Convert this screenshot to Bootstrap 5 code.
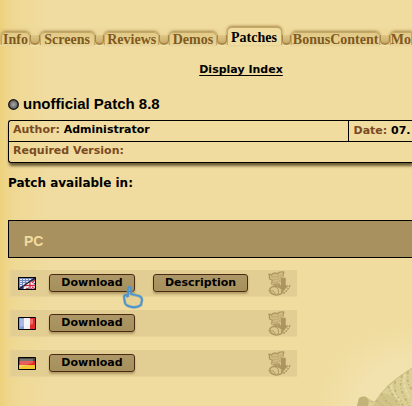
<!DOCTYPE html>
<html lang="en">
<head>
<meta charset="utf-8">
<meta name="viewport" content="width=device-width, initial-scale=1">
<title>Patches</title>
<link href="https://cdn.jsdelivr.net/npm/bootstrap@5.3.0/dist/css/bootstrap.min.css" rel="stylesheet">
<style>
body{background:linear-gradient(90deg,#edd17b 0,#efd68d 8px,#efd996 18px,#f0dca0 48px,#f0dc9e 100%);color:#000;font:bold 11px/14px "DejaVu Sans",Verdana,sans-serif;min-height:100vh;overflow:hidden}
.tabs{padding-top:22px;border-bottom:1px solid #f2e2ae;background:linear-gradient(180deg,transparent 25px,#b6954f22 44px)}
.tabs ul{height:23px;margin-left:1px}
.tab-link{display:block;height:13px;border:1px solid #c4a765;border-bottom:0;border-radius:5px 5px 0 0;background:linear-gradient(#e2ca88,#e9d494);box-shadow:0 -1px 3px #a58547;color:#80591f;font:bold 14px/14px "Liberation Serif",serif;text-align:center;text-decoration:none;white-space:nowrap}
.tab-link.active{height:18px;background:#f0dc9e;border-color:#c4a765;color:#000;line-height:19px}
.w-info{width:29px}.w-mid{width:55px}.w-demos{width:48px}.w-bonus{width:89px}
.valley{width:10px;height:10px;border:solid #a98748;border-width:0 1px 2px;border-radius:0 0 5px 5px;background:linear-gradient(#e0c887,#cbad6b)}
.index-line{padding:17px 0 0 62px}
.index-line a{color:#000;text-underline-offset:2px}
.title{font:bold 15px/18px "Liberation Sans",Arial,sans-serif;margin:18px 0 7px}
.ball{width:11px;height:11px;margin-right:4px}
.facts{border:1px solid #000;border-right:0;border-radius:3px 0 0 3px;box-shadow:1px 3px 3px #6b5c32;white-space:nowrap}
.facts table{table-layout:fixed}
.facts td{height:20px;padding:2px 4px 0;vertical-align:top}
.facts tr+tr td{border-top:1px solid #000;height:21px}
.facts .date{width:64px;border-left:1px solid #000;padding:3px 0 0 5px}
.tag{color:#7a4a22}
.avail{font-size:12px;line-height:16px;margin:12px 0 29px}
.platform{border:1px solid #000;border-right:0;background:#a8915f;color:#f0dc9e;font:bold 14px/16px "Liberation Sans",Arial,sans-serif;padding:12px 15px 8px;margin-bottom:12px}
.files{width:289px;gap:14px}
.file-row{height:26px;padding:0 5px 0 10px;background:linear-gradient(90deg,#e3cf9500,#e2cd92 4px);box-shadow:0 1px 1px #e8d398}
.flag{width:18px;height:13px;margin-right:13px}
.plate{height:18px;padding:0 10px;border:1px solid #4c2912;border-radius:3px;background:linear-gradient(#ad9767,#a58f5b);box-shadow:0 2px 2px #b39c67;color:#000;font:bold 11px/14px "DejaVu Sans",Verdana,sans-serif}
.plate-dl{width:86px}.plate-desc{width:95px;margin-left:18px}
.dl-icon{width:25px;height:25px}
.pointer{left:122px;top:286px;width:22px;height:23px}
.statue{right:0;bottom:0;width:112px;height:96px;pointer-events:none}
</style>
<script src="https://cdn.jsdelivr.net/npm/bootstrap@5.3.0/dist/js/bootstrap.bundle.min.js"></script>
</head>
<body class="position-relative">
<svg class="statue position-absolute" viewBox="0 0 112 96" aria-hidden="true">
<defs><radialGradient id="glow" cx="1" cy="1" r="1"><stop offset=".45" stop-color="#f3e6b8" stop-opacity=".6"/><stop offset=".85" stop-color="#f3e6b8" stop-opacity="0"/></radialGradient></defs>
<rect width="112" height="96" fill="url(#glow)"/>
<path d="M57 96L59 88Q64 85 68 88L75 92Q82 82 88 75Q98 66 112 58V96Z" fill="#dccf94"/>
<path d="M59 88Q66 84 69 91L68 96H57Z" fill="#c2b478"/>
<path d="M80 85Q89 79 100 96H73Z" fill="#d2c388"/>
<path d="M76 90l7 6M81 83l5 8 6 5M88 76q4 9 12 20M95 71q-1 12 3 16l5 9M102 65q-3 10 1 19l6 12M108 61q-2 13 4 18" fill="none" stroke="#c2b47b" stroke-width="2" stroke-dasharray="3 2 1 2"/>
<path d="M91 75q2 10 9 15M105 64q-3 12 5 24" fill="none" stroke="#e6daa5" stroke-width="2" stroke-dasharray="4 1"/>
<path d="M68 91l7 1q9-16 37-34" fill="none" stroke="#cdbf85"/>
</svg>
<svg class="d-none" aria-hidden="true">
<symbol id="dl" viewBox="0 0 25 26">
<path d="M1 3Q7 3 10 1L17 0L16 7Q16 11 12 13L5 15L4 12L5 9L2 8Z" fill="#cfba80"/>
<path d="M1 3l3 1 3-2 3 1 3-2 4 0-1 5M2 4v4l3 2-1 4" fill="none" stroke="#ad9560" stroke-width="1.200"/>
<path d="M4 6q6 1 10-2M4 9q6 1 11-3M6 12q5 0 8-3" fill="none" stroke="#b59e68" stroke-dasharray="2 1"/>
<path d="M5 14q4-2 8-1l1 3-6 1z" fill="#b59e68"/>
<path d="M2 20q1-4 6-4q7 1 8 5q-1 4-7 4q-6-1-7-5z" fill="#dac78c" stroke="#ad9560" stroke-width="1.500"/>
<path d="M8 16q5 3 3 8M3 21q3-2 5 3" fill="none" stroke="#ad9560"/>
<path d="M14 7h5v8h3l-5.500 6-5.500-6h3z" fill="#ad9560"/>
<path d="M14 21l3 2q4-3 7-9" fill="none" stroke="#ad9560" stroke-width="1.500" stroke-dasharray="2 1"/>
</symbol>
</svg>
<nav class="tabs" aria-label="Sections">
<ul class="list-unstyled d-flex align-items-end mb-0">
<li><a class="tab-link w-info" href="#">Info</a></li><li class="valley"></li>
<li><a class="tab-link w-mid" href="#">Screens</a></li><li class="valley"></li>
<li><a class="tab-link w-mid" href="#">Reviews</a></li><li class="valley"></li>
<li><a class="tab-link w-demos" href="#">Demos</a></li><li class="valley"></li>
<li><a class="tab-link w-mid active" aria-current="page" href="#">Patches</a></li><li class="valley"></li>
<li><a class="tab-link w-bonus" href="#">BonusContent</a></li><li class="valley"></li>
<li class="flex-fill"><a class="tab-link text-end pe-0 rounded-end-0" href="#">Mo</a></li>
</ul>
</nav>
<main class="ps-2">
<div class="index-line text-center"><a href="#">Display Index</a></div>
<h1 class="title d-flex align-items-center">
<svg class="ball" viewBox="0 0 11 11" aria-hidden="true"><defs><radialGradient id="orb"><stop offset="0" stop-color="#aaa"/><stop offset=".8" stop-color="#666"/><stop offset="1" stop-color="#444"/></radialGradient></defs><circle cx="5.5" cy="5.5" r="4.8" fill="url(#orb)" stroke="#161616" stroke-width="1.3"/></svg>
unofficial Patch 8.8</h1>
<div class="facts">
<table class="w-100">
<tr><td><span class="tag">Author:</span> Administrator</td><td class="date"><span class="tag">Date:</span> 07.</td></tr>
<tr><td colspan="2"><span class="tag">Required Version:</span></td></tr>
</table>
</div>
<p class="avail">Patch available in:</p>
<h2 class="platform">PC</h2>
<div class="files d-flex flex-column">
<div class="file-row d-flex align-items-center">
<svg class="flag" viewBox="0 0 18 13" role="img" aria-label="English"><path fill="#1a1c3c" d="M0 0h18v13H0z"/><path fill="#7088c4" d="M1 1h16v11H1z"/><path d="M2 2.5h13M2 4.5h10M2 6.5h8M2 8.5h5" stroke="#e6eaf5" stroke-dasharray="2 1"/><path d="M1 12h16V1z" fill="#31428f"/><path d="M12 4v8M5 8.500h12M6 12l11-8M9 6l8 6" stroke="#fff" stroke-width="2.500"/><path d="M12 4v8M6 8.500h11M9 12l-1-1M14 10l3 2M14 6l3-3" stroke="#d22b3d" stroke-width="1.300"/><path d="M1 12L17 1" stroke="#191b2c" stroke-width="1.200"/><path fill="none" stroke="#000" d="M.5.5h17v12H.5z"/></svg>
<button class="plate plate-dl" type="button">Download</button>
<button class="plate plate-desc" type="button">Description</button>
<svg class="dl-icon ms-auto" aria-hidden="true"><use href="#dl"/></svg>
</div>
<div class="file-row d-flex align-items-center">
<svg class="flag" viewBox="0 0 18 13" role="img" aria-label="French"><path fill="#829bd8" d="M1 1h5v11H1z"/><path fill="#f3f1f1" d="M6 1h6v11H6z"/><path fill="#e22c2c" d="M12 1h5v11h-5z"/><path fill="#fff" opacity=".3" d="M2 2h13v5L2 10z"/><path fill="none" stroke="#000" d="M.5.5h17v12H.5z"/></svg>
<button class="plate plate-dl" type="button">Download</button>
<svg class="dl-icon ms-auto" aria-hidden="true"><use href="#dl"/></svg>
</div>
<div class="file-row d-flex align-items-center">
<svg class="flag" viewBox="0 0 18 13" role="img" aria-label="German"><path fill="#4b4945" d="M1 1h16v3H1z"/><path fill="#e02722" d="M1 4h16v4H1z"/><path fill="#f4c532" d="M1 8h16v4H1z"/><path fill="#fff" opacity=".25" d="M2 2h13v4L2 10z"/><path fill="none" stroke="#000" d="M.5.5h17v12H.5z"/></svg>
<button class="plate plate-dl" type="button">Download</button>
<svg class="dl-icon ms-auto" aria-hidden="true"><use href="#dl"/></svg>
</div>
</div>
</main>
<svg class="pointer position-absolute" viewBox="0 0 22 23" aria-hidden="true"><path d="M6 11V3Q6 1 7.500 1Q9 1 9 3V8L17 10Q20 11 20 14L19 19Q15 22 10 21Q4 20 3 17L2 11Q2 9 4 9L6 11" fill="#e0cc90" stroke="#85a5a2" stroke-width="3" stroke-linejoin="round" opacity=".6"/><path d="M6 11V3Q6 1 7.500 1Q9 1 9 3V8L17 10Q20 11 20 14L19 19Q15 22 10 21Q4 20 3 17L2 11Q2 9 4 9L6 11" fill="none" stroke="#4b94d2" stroke-width="1.800" stroke-linejoin="round"/></svg>
</body>
</html>
